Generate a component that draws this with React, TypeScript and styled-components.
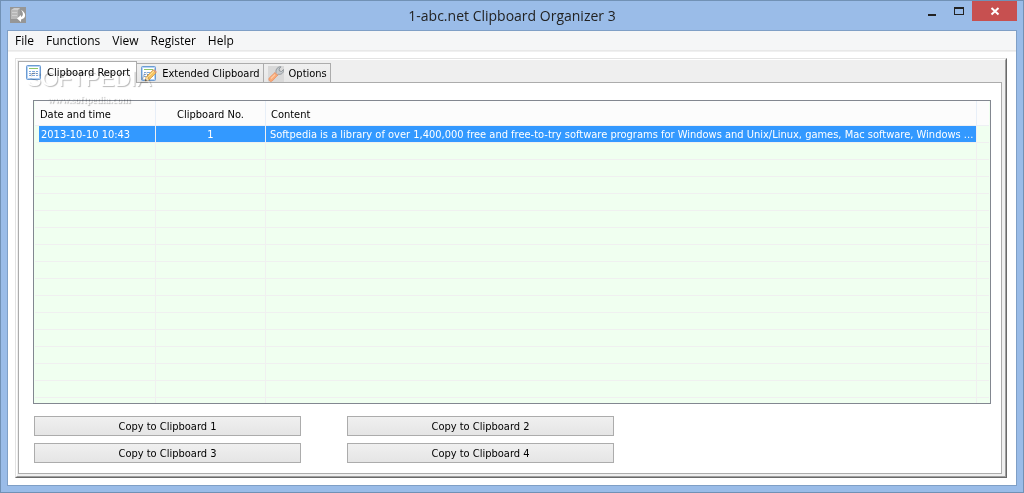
import React from "react";
import styled, { createGlobalStyle, css } from "styled-components";

const tahoma = `"DejaVu Sans Condensed", "Noto Sans", sans-serif`;
const segoe = `"Open Sans", "Noto Sans", sans-serif`;

const GlobalStyle = createGlobalStyle`
  * { box-sizing: border-box; }
  body { margin: 0; font-family: ${tahoma}; font-size: 11px; color: #000; }
  button { font: inherit; color: inherit; margin: 0; }
`;

const Window = styled.div`
  height: 100vh;
  min-height: 320px;
  display: flex;
  flex-direction: column;
  padding: 0 6px 6px;
  background: #9abce8;
  border: 1px solid #7191b5;
`;

const TitleBar = styled.header`
  display: grid;
  grid-template-columns: 132px 1fr 132px;
  height: 29px;
`;

const AppIconSlot = styled.div`
  padding: 6px 3px;
  height: 29px;
  svg { display: block; }
`;

const Title = styled.h1`
  margin: 0;
  text-align: center;
  font: 400 14px/29px ${segoe};
  color: #222;
  white-space: nowrap;
`;

const WindowControls = styled.div`
  display: flex;
  justify-content: flex-end;
  align-items: flex-start;
`;

const ControlButton = styled.button<{ $close?: boolean }>`
  display: flex;
  justify-content: center;
  width: ${(p) => (p.$close ? 45 : 27)}px;
  height: 20px;
  padding: 0;
  border: 0;
  background: ${(p) => (p.$close ? "#c75050" : "transparent")};
`;

const Client = styled.div`
  flex: 1;
  min-height: 0;
  display: flex;
  flex-direction: column;
  border: 1px solid #7f9fc6;
  background: #fff;
`;

const MenuBar = styled.nav`
  display: flex;
  gap: 12px;
  height: 20px;
  padding: 0 7px;
  background: #f5f6f7;
  border-bottom: 1px solid #e8e8e8;
  box-shadow: 0 1px #f0f0f0;
`;

const MenuItem = styled.button`
  padding: 0;
  border: 0;
  background: transparent;
  font: 400 12px/19px ${segoe};
`;

const Bevel = styled.main`
  position: relative;
  flex: 1;
  min-height: 0;
  display: flex;
  flex-direction: column;
  margin: 7px 9px 7px 7px;
  border: 1px solid;
  border-color: #e3e3e3 #696969 #696969 #e3e3e3;
`;

const BevelInner = styled.div`
  flex: 1;
  min-height: 0;
  display: flex;
  flex-direction: column;
  padding: 1px 3px 2px 1px;
  background: #efefef;
  border: 1px solid;
  border-color: #fff #a0a0a0 #a0a0a0 #fff;
`;

const TabList = styled.div`
  display: flex;
  align-items: flex-end;
  height: 21px;
`;

const Tab = styled.button<{ $active?: boolean }>`
  display: flex;
  align-items: center;
  gap: 5px;
  height: 19px;
  padding: 1px 3px 0 4px;
  border: 1px solid #acacac;
  border-left-width: 0;
  border-bottom: 0;
  background: linear-gradient(#f0f0f0, #e6e6e6);
  white-space: nowrap;
  line-height: 17px;
  ${(p) =>
    p.$active &&
    css`
      height: 22px;
      margin-bottom: -1px;
      padding: 0 6px 1px 7px;
      gap: 6px;
      border-left-width: 1px;
      background: #fff;
      z-index: 1;
    `}
`;

const TabPage = styled.section`
  flex: 1;
  min-height: 0;
  display: flex;
  flex-direction: column;
  padding: 17px 10px 10px 14px;
  background: #fff;
  border: 1px solid #acacac;
`;

const ListView = styled.div`
  flex: 1;
  min-height: 0;
  overflow: hidden;
  padding: 0 1px;
  background: #f0fff0;
  border: 1px solid #828790;
`;

const Table = styled.table`
  width: 100%;
  table-layout: fixed;
  border-collapse: separate;
  border-spacing: 0;
`;

const Col = styled.col<{ $width?: number }>`
  width: ${(p) => (p.$width ? `${p.$width}px` : "auto")};
`;

const HeadCell = styled.th<{ $center?: boolean }>`
  height: 25px;
  padding: 2px 5px 0;
  font-weight: 400;
  text-align: ${(p) => (p.$center ? "center" : "left")};
  background: #fcfcfc;
  border-right: 1px solid #e8eff8;
  border-bottom: 1px solid #eef0f4;
  &:last-child { border-right: 0; }
`;

const Cell = styled.td<{ $center?: boolean }>`
  height: 17px;
  padding: 2px 4px 0;
  line-height: 14px;
  text-align: ${(p) => (p.$center ? "center" : "left")};
  white-space: nowrap;
  overflow: hidden;
  border-right: 1px solid #f0f0f0;
  border-bottom: 1px solid #f0f0f0;
  &:last-child { border-right: 0; }
`;

const Row = styled.tr<{ $selected?: boolean }>`
  ${(p) =>
    p.$selected &&
    css`
      color: #fff;
      ${Cell} { background: #3399ff; background-clip: padding-box; }
      ${Cell}:first-child { border-left: 4px solid #f0fff0; padding: 2px 2px 0; }
      ${Cell}:last-child { background: none; }
    `}
`;

const Actions = styled.div`
  display: grid;
  grid-template-columns: 267px 267px;
  column-gap: 46px;
  row-gap: 7px;
  padding: 12px 1px 0;
`;

const ActionButton = styled.button`
  height: 20px;
  padding: 0;
  border: 1px solid #acacac;
  background: linear-gradient(#f0f0f0, #e5e5e5);
`;

const Watermark = styled.div`
  position: absolute;
  left: 8px;
  top: 7px;
  z-index: 2;
  width: 130px;
  text-align: center;
  pointer-events: none;
  color: #fff;
  text-shadow: 1px 1px 1px rgba(0, 0, 0, 0.28);
  mix-blend-mode: multiply;
`;

const WatermarkName = styled.div`
  font: 400 22px/26px "Liberation Sans", sans-serif;
`;

const WatermarkSite = styled.div`
  font: 700 10px/16px "Liberation Serif", serif;
`;

const AppIcon = () => (
  <svg width="16" height="16" viewBox="0 0 16 16" aria-hidden="true">
    <rect width="16" height="16" fill="#969696" />
    <path d="M1 3l3-2h6v9l-2 2H1z" fill="#cdcdcd" />
    <path d="M1 3h7v9H1z" fill="#b8b8b8" />
    <path d="M8 3l2-2v9l-2 2z" fill="#a2a2a2" />
    <path d="M2 5.500h5M2 8.500h5" stroke="#cfcfcf" />
    <path d="M11 3c5.500 2.500 5.500 8.500 0 9.500V15l-4-3.500L11 8v2c2.500-1 2.500-4.500 0-7z" fill="#fff" />
  </svg>
);

const SheetShapes = () => (
  <>
    <rect x=".5" y=".5" width="14" height="14" rx="1" fill="#b5d3f5" stroke="#6b9bd2" />
    <rect x="2" y="2" width="11" height="11" fill="#fff" />
    <path d="M3 3.500h9" stroke="#8cc56a" />
    <path d="M3 6.500h2M6 6.500h3M10 6.500h2M3 8.500h2M6 8.500h3M10 8.500h2M3 10.500h2M6 10.500h3M10 10.500h2" stroke="#7fa8dc" />
  </>
);

const ReportIcon = () => (
  <svg width="15" height="15" viewBox="0 0 15 15" aria-hidden="true">
    <SheetShapes />
  </svg>
);

const EditIcon = () => (
  <svg width="16" height="16" viewBox="0 0 16 16" aria-hidden="true">
    <SheetShapes />
    <path d="M4 15l1-4 7-7 3 3-7 7z" fill="#f7c462" stroke="#c08a3a" strokeWidth=".6" />
    <path d="M6 12l7-7" stroke="#ffe39a" />
    <path d="M12 4l1-1 3 3-1 1z" fill="#e79a78" />
    <path d="M4 15l1-4 3 3z" fill="#f6dfb8" />
    <path d="M4 15l.5-2 1.500 1.500z" fill="#333" />
  </svg>
);

const WrenchIcon = () => (
  <svg width="16" height="16" viewBox="0 0 16 16" aria-hidden="true">
    <rect width="16" height="16" fill="#d9d9d9" />
    <path d="M8 6.500C7.500 3 10 .5 13 .8L11 3l.5 2 2 .5L15.500 3.500c.5 3-2 5.300-5 4.800L9 9.500 7 7.500z" fill="#c6cbcf" stroke="#858b90" strokeWidth=".8" />
    <path d="M7 6.500l2.700 2.700-5.500 5.800c-2 1.500-4.200-.8-3-3z" fill="#f9ab78" stroke="#e98b5b" strokeWidth=".7" />
    <path d="M3 12.500l4-4" stroke="#ffcba4" strokeWidth="1.300" />
  </svg>
);

const menus = ["File", "Functions", "View", "Register", "Help"];
const emptyRows = Array.from({ length: 60 }, (_, i) => i);

export default function App() {
  return (
    <Window>
      <GlobalStyle />
      <TitleBar>
        <AppIconSlot><AppIcon /></AppIconSlot>
        <Title>1-abc.net Clipboard Organizer 3</Title>
        <WindowControls>
          <ControlButton aria-label="Minimize">
            <svg width="27" height="20"><path d="M10 13h8v2h-8z" fill="#222" /></svg>
          </ControlButton>
          <ControlButton aria-label="Maximize">
            <svg width="27" height="20"><path d="M9 6h10v8H9zM10 8v5h8V8z" fill="#222" fillRule="evenodd" /></svg>
          </ControlButton>
          <ControlButton $close aria-label="Close">
            <svg width="45" height="20"><path d="M19.500 7l7 6.500M26.500 7l-7 6.500" stroke="#fff" strokeWidth="2" /></svg>
          </ControlButton>
        </WindowControls>
      </TitleBar>
      <Client>
        <MenuBar>
          {menus.map((m) => <MenuItem key={m}>{m}</MenuItem>)}
        </MenuBar>
        <Bevel>
          <BevelInner>
            <TabList role="tablist">
              <Tab $active role="tab" aria-selected="true"><ReportIcon />Clipboard Report</Tab>
              <Tab role="tab" aria-selected="false"><EditIcon />Extended Clipboard</Tab>
              <Tab role="tab" aria-selected="false"><WrenchIcon />Options</Tab>
            </TabList>
            <TabPage>
              <ListView>
                <Table>
                  <colgroup>
                    <Col $width={121} />
                    <Col $width={110} />
                    <Col />
                    <Col $width={12} />
                  </colgroup>
                  <thead>
                    <tr>
                      <HeadCell>Date and time</HeadCell>
                      <HeadCell $center>Clipboard No.</HeadCell>
                      <HeadCell>Content</HeadCell>
                      <HeadCell as="td" />
                    </tr>
                  </thead>
                  <tbody>
                    <Row $selected>
                      <Cell>2013-10-10 10:43</Cell>
                      <Cell $center>1</Cell>
                      <Cell>Softpedia is a library of over 1,400,000 free and free-to-try software programs for Windows and Unix/Linux, games, Mac software, Windows ...</Cell>
                      <Cell />
                    </Row>
                    {emptyRows.map((i) => (
                      <Row key={i}><Cell /><Cell /><Cell /><Cell /></Row>
                    ))}
                  </tbody>
                </Table>
              </ListView>
              <Actions>
                {[1, 2, 3, 4].map((n) => (
                  <ActionButton key={n}>Copy to Clipboard {n}</ActionButton>
                ))}
              </Actions>
            </TabPage>
          </BevelInner>
          <Watermark aria-hidden="true">
            <WatermarkName>SOFTPEDIA</WatermarkName>
            <WatermarkSite>www.softpedia.com</WatermarkSite>
          </Watermark>
        </Bevel>
      </Client>
    </Window>
  );
}
